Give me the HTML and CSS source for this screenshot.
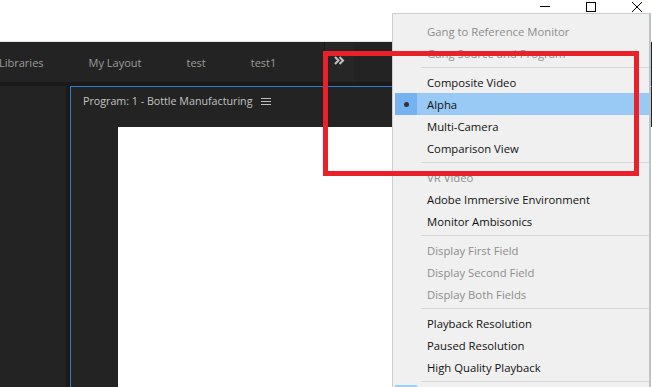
FILE: index.html
```html
<!DOCTYPE html>
<html lang="en">
<head>
  <meta charset="UTF-8">
  <title>Program Monitor Menu</title>
  <link rel="stylesheet" href="styles.css">
</head>
<body>

  <div class="app">
    <header class="titlebar">
      <div class="win-controls">
        <span class="win-btn">
          <svg width="12" height="12" viewBox="0 0 12 12"><path d="M1 6.5 H11" stroke="#000" stroke-width="1"/></svg>
        </span>
        <span class="win-btn">
          <svg width="12" height="12" viewBox="0 0 12 12"><rect x="1.5" y="2.5" width="9" height="9" fill="none" stroke="#000" stroke-width="1"/></svg>
        </span>
        <span class="win-btn">
          <svg width="12" height="12" viewBox="0 0 12 12"><path d="M1 2 L11 12 M11 2 L1 12" stroke="#000" stroke-width="1"/></svg>
        </span>
      </div>
    </header>

    <nav class="tabbar">
      <div class="tabs">
        <span class="tab">Libraries</span>
        <span class="tab">My Layout</span>
        <span class="tab">test</span>
        <span class="tab">test1</span>
      </div>
      <div class="more">
        <svg width="11" height="9" viewBox="0 0 11 9"><path d="M1 1 L4.5 4.5 L1 8 M5.5 1 L9 4.5 L5.5 8" fill="none" stroke="#c4c4c4" stroke-width="2"/></svg>
      </div>
    </nav>

    <div class="workspace">
      <div class="side-panel"></div>
      <div class="program">
        <div class="program-head">
          Program: 1 - Bottle Manufacturing
          <svg class="burger" width="10" height="9" viewBox="0 0 10 9"><path d="M0 1.5 H10 M0 4.5 H10 M0 7.5 H10" stroke="#bdbdbd" stroke-width="1"/></svg>
        </div>
        <div class="program-body">
          <div class="frame"></div>
        </div>
      </div>
    </div>
  </div>

  <!-- context menu of the program monitor -->
  <ul class="menu">
    <li class="item disabled"><span class="check"></span><span class="label">Gang to Reference Monitor</span></li>
    <li class="item disabled"><span class="check"></span><span class="label">Gang Source and Program</span></li>
    <li class="sep"></li>
    <li class="item"><span class="check"></span><span class="label">Composite Video</span></li>
    <li class="item active"><span class="check"><i class="dot"></i></span><span class="label">Alpha</span></li>
    <li class="item"><span class="check"></span><span class="label">Multi-Camera</span></li>
    <li class="item"><span class="check"></span><span class="label">Comparison View</span></li>
    <li class="sep"></li>
    <li class="item disabled"><span class="check"></span><span class="label">VR Video</span></li>
    <li class="item"><span class="check"></span><span class="label">Adobe Immersive Environment</span></li>
    <li class="item"><span class="check"></span><span class="label">Monitor Ambisonics</span></li>
    <li class="sep"></li>
    <li class="item disabled"><span class="check"></span><span class="label">Display First Field</span></li>
    <li class="item disabled"><span class="check"></span><span class="label">Display Second Field</span></li>
    <li class="item disabled"><span class="check"></span><span class="label">Display Both Fields</span></li>
    <li class="sep"></li>
    <li class="item"><span class="check"></span><span class="label">Playback Resolution</span></li>
    <li class="item"><span class="check"></span><span class="label">Paused Resolution</span></li>
    <li class="item"><span class="check"></span><span class="label">High Quality Playback</span></li>
    <li class="sep"></li>
    <li class="item checked"><span class="check"></span></li>
  </ul>

  <div class="callout"></div>

</body>
</html>
```

FILE: styles.css
```css
body {
  margin: 0;
  width: 652px;
  height: 387px;
  overflow: hidden;
  background: #fff;
  font-family: 'Open Sans', sans-serif;
}

.app {
  display: flex;
  flex-direction: column;
  height: 387px;
}

.titlebar {
  height: 41px;
  border-bottom: 1px solid #e2e2e2;
  display: flex;
  justify-content: flex-end;
  align-items: flex-start;
}

.win-controls {
  display: flex;
  gap: 34px;
  margin-right: 9px;
}

.win-btn {
  display: block;
  width: 12px;
  height: 12px;
}

.win-btn svg {
  display: block;
}

.tabbar {
  height: 40px;
  background: #232323;
  border-bottom: 4px solid #1a1a1a;
  display: flex;
}

.tabs {
  width: 325px;
  display: flex;
  align-items: center;
  gap: 45px;
  margin-left: -1px;
  border-right: 1px solid #1b1b1b;
}

.tab {
  color: #9c9c9c;
  font-size: 11px;
}

.more {
  width: 29px;
  display: flex;
  align-items: center;
  justify-content: center;
  background: #262626;
  padding-bottom: 4px;
}

.workspace {
  flex: 1;
  display: flex;
  background: #1a1a1a;
  min-height: 0;
}

.side-panel {
  width: 66px;
  background: #232323;
  margin-right: 4px;
}

.program {
  flex: 1;
  display: flex;
  flex-direction: column;
  background: #232323;
  border: 1px solid #2e7fcd;
  border-right: none;
  border-bottom: none;
}

.program-head {
  height: 28px;
  padding-left: 12px;
  color: #c2c2c2;
  font-size: 10.7px;
  display: flex;
  align-items: center;
  gap: 9px;
}

.burger {
  display: block;
}

.program-body {
  flex: 1;
  display: flex;
  padding: 12px 0 0 47px;
}

.frame {
  flex: 1;
  background: #fff;
}

/* popup menu */
.menu {
  position: absolute;
  left: 392px;
  top: 13px;
  width: 259px;
  height: 374px;
  box-sizing: border-box;
  overflow: hidden;
  margin: 0;
  padding: 6px 0 0 2px;
  list-style: none;
  background: #f0f0f0;
  border: 1px solid #cdcdcd;
  border-right: 2px solid #bcc3cf;
  border-bottom: none;
  font-size: 11.3px;
  color: #111;
}

.item {
  height: 22px;
  display: flex;
  align-items: center;
}

.check {
  width: 22px;
  height: 22px;
  display: flex;
  align-items: center;
  justify-content: center;
}

.label {
  padding-left: 10px;
}

.item.disabled {
  color: #8d8d8d;
}

.item.active {
  background: #99c9f5;
}

.item.active .check {
  background: #74b3ef;
}

.item.checked .check {
  background: #a3cdf3;
}

.dot {
  width: 5px;
  height: 5px;
  border-radius: 50%;
  background: #333;
}

.sep {
  height: 7px;
  box-sizing: border-box;
  padding-top: 3px;
  margin-left: 26px;
}

.sep::after {
  content: "";
  display: block;
  height: 1px;
  background: #d5d5d5;
}

.callout {
  position: absolute;
  left: 323px;
  top: 51px;
  width: 316px;
  height: 125px;
  box-sizing: border-box;
  border: 5px solid #e8212b;
}
```
